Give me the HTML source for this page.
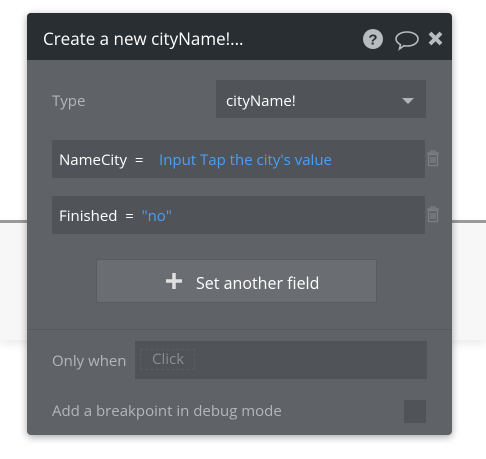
<!DOCTYPE html>
<html><head><style>
*{margin:0;padding:0;box-sizing:border-box}
body{width:486px;height:459px;background:#fff;position:relative;overflow:hidden;font-family:"Open Sans","Liberation Sans",sans-serif}
.band{position:absolute;left:0;top:220px;width:486px;height:120px;background:#f7f7f7;border-top:3px solid #9a9a9a;box-shadow:0 4px 8px rgba(0,0,0,.08)}
.panel{position:absolute;left:27px;top:13px;width:425px;height:422px;background:#5f6367;border-radius:4px;box-shadow:0 2px 8px rgba(0,0,0,.35);overflow:hidden}
.hdr{height:47px;background:#282e31;color:#fff;font-size:17px;padding:14px 0 0 16px}
.a{position:absolute}
.t{color:#fff;font-size:15px}
.box{background:#505458}
</style></head><body>
<div class="band"></div>
<div class="panel">
<div class="hdr">Create a new cityName!...</div>
<svg class="a" style="left:336px;top:15px" width="86" height="24" viewBox="0 0 86 24">
<circle cx="10" cy="11" r="10" fill="#b8bcbf"/><text x="10" y="16.5" font-size="15" font-weight="bold" text-anchor="middle" fill="#282e31" font-family="Liberation Sans">?</text>
<path d="M44 4c6.5 0 11 3.2 11 7s-4.5 7-11 7c-1 0-2 0-3-.3l-4.5 3.3 1-4.3c-2.3-1.4-4.5-3.3-4.5-5.7C33 7.2 37.5 4 44 4z" fill="none" stroke="#b8bcbf" stroke-width="1.6"/>
<path d="M67 5l11 11M78 5l-11 11" stroke="#b8bcbf" stroke-width="4"/>
</svg>
<div class="a" style="left:25px;top:78px;color:#b3b6b9;font-size:15px">Type</div>
<div class="a box" style="left:189px;top:67px;width:210px;height:38px"></div>
<div class="a t" style="left:199px;top:78px">cityName!</div>
<div class="a" style="left:375px;top:85px;border-left:6px solid transparent;border-right:6px solid transparent;border-top:6px solid #b3b6b9"></div>

<div class="a box" style="left:25px;top:127px;width:373px;height:38px"></div>
<div class="a t" style="left:32px;top:137px">NameCity &nbsp;= &nbsp; &nbsp;<span style="color:#4a9ff5">Input Tap the city's value</span></div>
<div class="a box" style="left:25px;top:183px;width:373px;height:38px"></div>
<div class="a t" style="left:32px;top:193px">Finished &nbsp;= &nbsp;<span style="color:#4a9ff5">"no"</span></div>
<svg class="a" style="left:399px;top:137px" width="14" height="17" viewBox="0 0 14 17"><path d="M1 3h12M5 3V1h4v2M2.5 4.5h9v11h-9zM5 7v6M7 7v6M9 7v6" fill="none" stroke="#7c8084" stroke-width="1.3"/></svg>
<svg class="a" style="left:399px;top:193px" width="14" height="17" viewBox="0 0 14 17"><path d="M1 3h12M5 3V1h4v2M2.5 4.5h9v11h-9zM5 7v6M7 7v6M9 7v6" fill="none" stroke="#7c8084" stroke-width="1.3"/></svg>

<div class="a" style="left:69px;top:246px;width:281px;height:44px;background:#6a6e72;border:1px solid #585c60;border-radius:2px"></div>
<svg class="a" style="left:138px;top:259px" width="18" height="18"><path d="M9 1v16M1 9h16" stroke="#e0e0e0" stroke-width="3.5"/></svg>
<div class="a t" style="left:169px;top:259px;font-size:16px">Set another field</div>

<div class="a" style="left:0;top:316px;width:425px;height:1px;background:#55595d"></div>
<div class="a" style="left:25px;top:338px;color:#b3b6b9;font-size:15px">Only when</div>
<div class="a box" style="left:108px;top:328px;width:292px;height:38px"></div>
<div class="a" style="left:113px;top:336px;width:55px;height:21px;border:1px dashed #5a5e62;color:#8a8e92;font-size:15px;padding:0 0 0 11px;line-height:19px">Click</div>
<div class="a" style="left:25px;top:388px;color:#b3b6b9;font-size:15px">Add a breakpoint in debug mode</div>
<div class="a box" style="left:377px;top:387px;width:22px;height:23px"></div>
</div>
</body></html>
